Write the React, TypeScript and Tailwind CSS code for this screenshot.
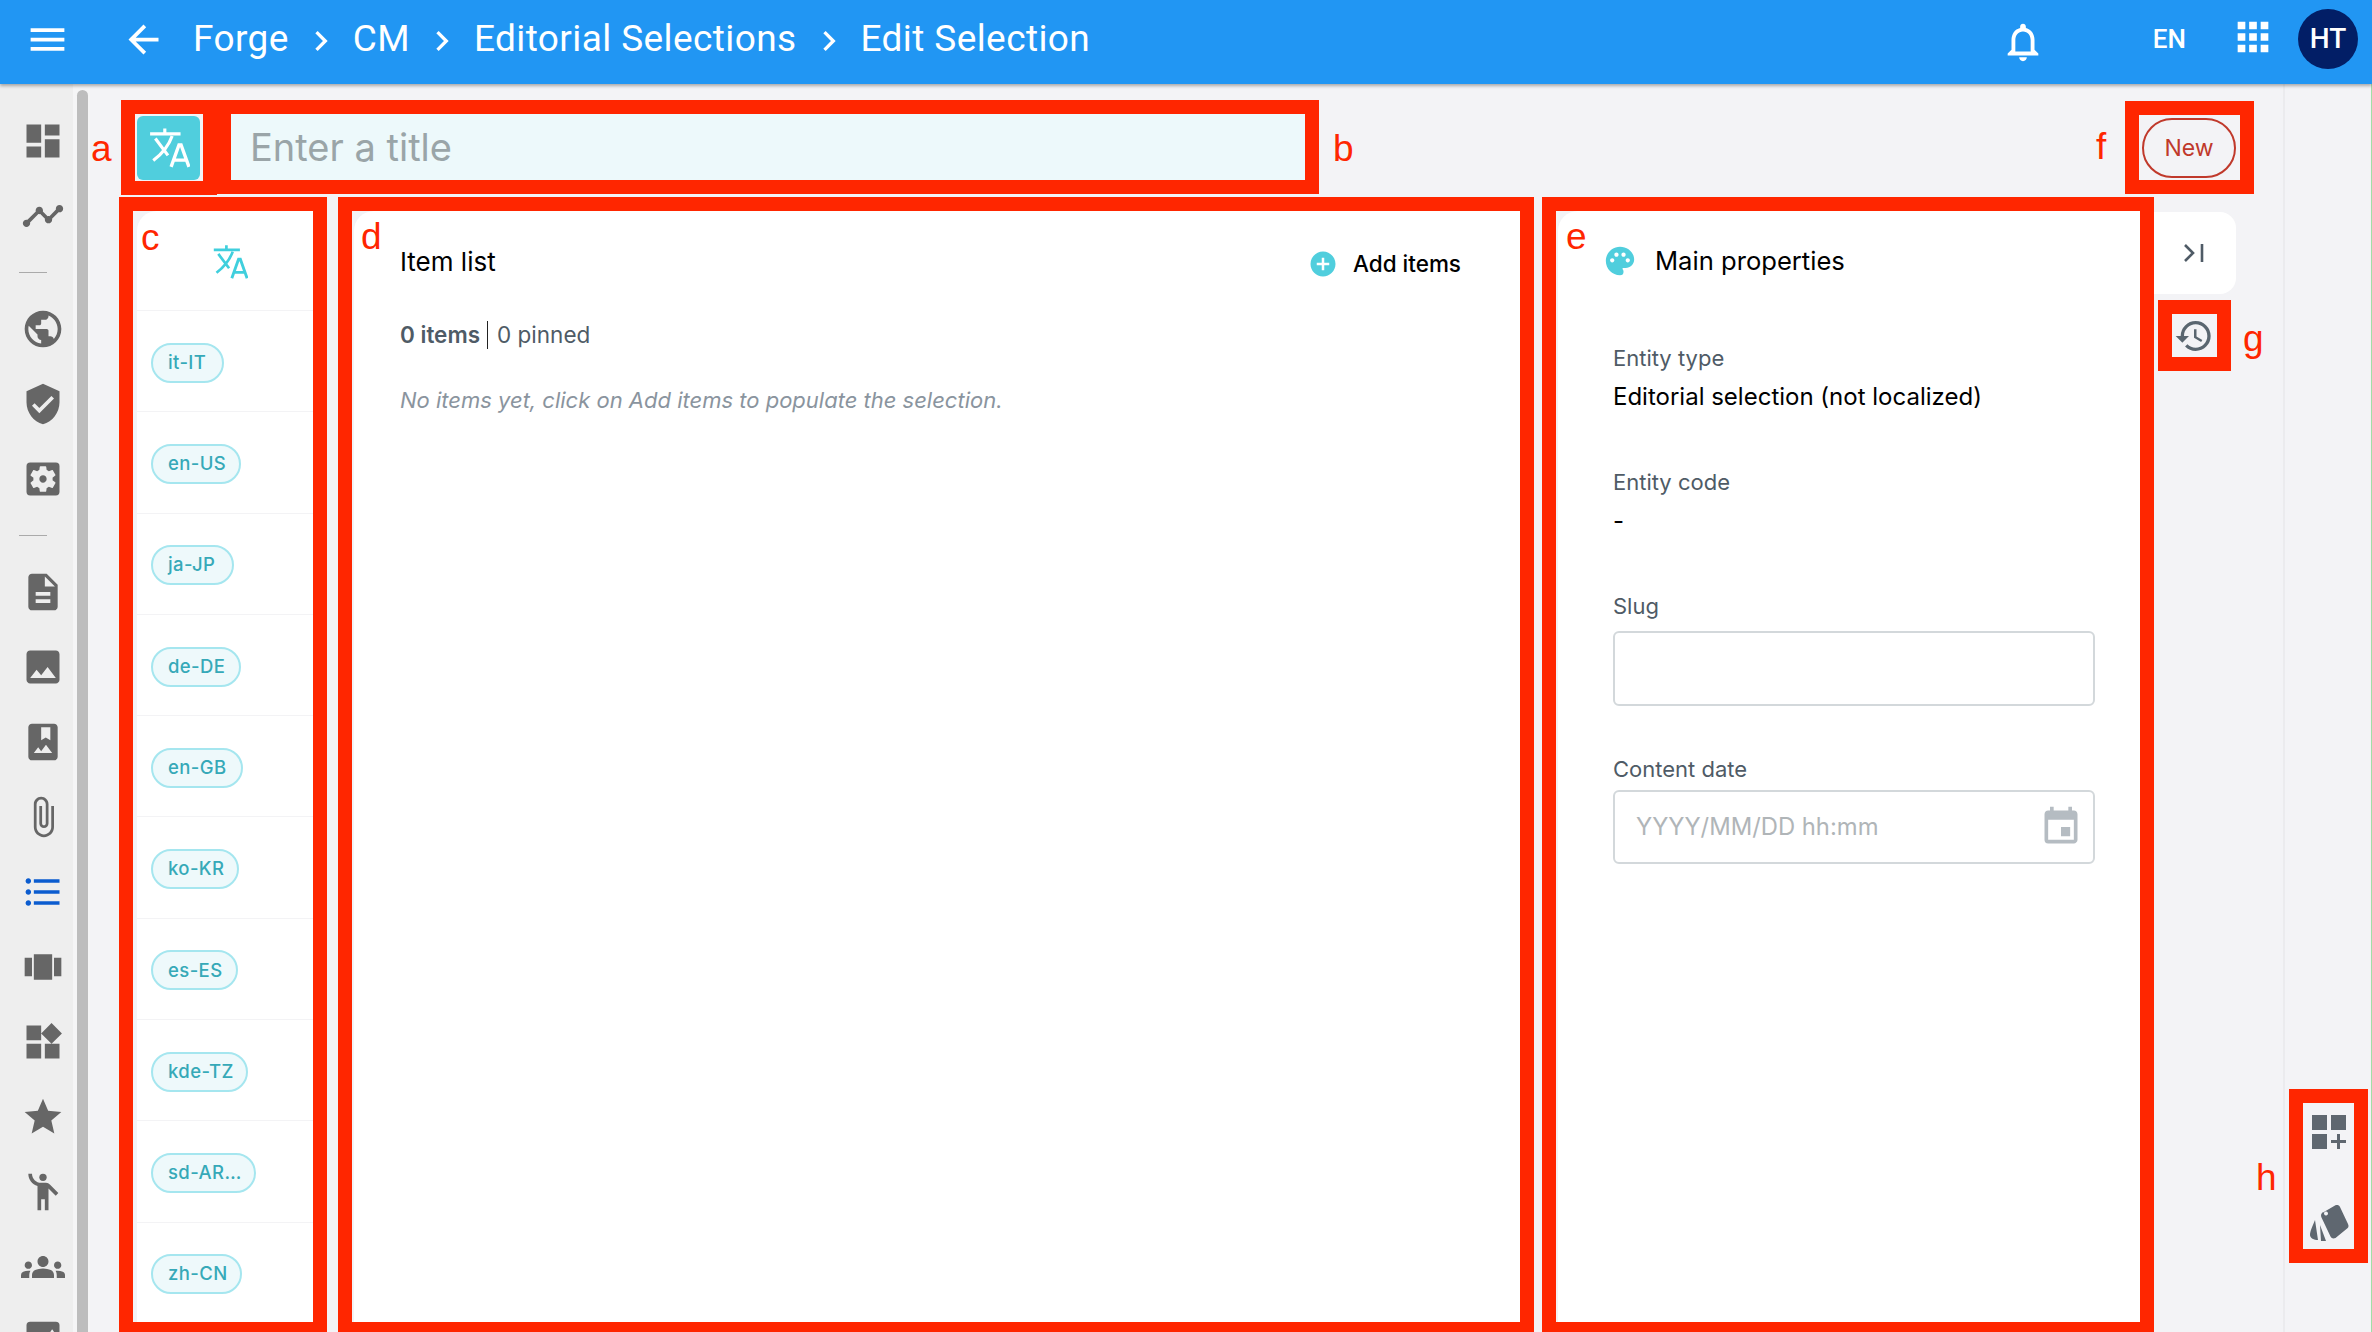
import React from "react";
import {
  MdMenu, MdArrowBack, MdChevronRight, MdNotificationsNone, MdApps, MdDashboard, MdTimeline, MdPublic,
  MdVerifiedUser, MdSettingsApplications, MdDescription, MdImage, MdPhotoAlbum, MdAttachFile,
  MdFormatListBulleted, MdViewCarousel, MdWidgets, MdStar, MdEmojiPeople, MdGroups,
  MdAddCircle, MdPalette, MdEvent, MdHistory,
} from "react-icons/md";

const Translate = ({ className }: { className: string }) => (
  <svg viewBox="0 0 40 40" className={className} fill="none" stroke="currentColor">
    <path d="M2 6.500h29M16 1.500v5" strokeWidth="3" />
    <path d="M7 11l12 16M23 8.500C20 17 14 25 5 32" strokeWidth="3" />
    <path d="M22 38l7.500-21h2l7.500 21M24.500 31.500h11" strokeWidth="3.200" />
  </svg>
);

const ImageBox = ({ className }: { className?: string }) => (
  <svg viewBox="0 0 24 24" className={`w-[44px] h-[44px] ${className ?? ""}`} fill="currentColor">
    <path d="M5 1h14a2 2 0 0 1 2 2v18H3V3a2 2 0 0 1 2-2z" />
    <path d="M17 5l2 3h-4z" fill="#eeeeee" />
  </svg>
);

const Pill = ({ label, w }: { label: string; w: string }) => (
  <div className="h-[101.3px] shrink-0 flex items-center pl-[14px] pt-[3px] border-t border-[#f3f3f5]">
    <span className={`${w} h-[40px] rounded-full border-2 border-[#a5e6ef] bg-[#eef9fb] pl-[15px] flex items-center text-[18.5px] tracking-[0.4px] font-medium text-[#36a9b8] whitespace-nowrap`}>
      {label}
    </span>
  </div>
);

const Field = ({ label, value }: { label: string; value: string }) => (
  <div className="h-[124px]">
    <div className="text-[22px] leading-[26px] text-[#4f5b66]">{label}</div>
    <div className="mt-[13px] text-[24px] leading-[26px] text-black">{value}</div>
  </div>
);

const Sep = () => <MdChevronRight className="text-[40px] mx-[12px] mt-[4px] shrink-0" />;

const sideTop = [MdPublic, MdVerifiedUser, MdSettingsApplications];
const sideBottom = [MdDescription, MdImage, MdPhotoAlbum, MdAttachFile];
const sideRest = [MdViewCarousel, MdWidgets, MdStar, MdEmojiPeople, MdGroups];

const SideIcon = ({ I, c = "text-[#666666]" }: { I: React.ComponentType<{ className?: string }>; c?: string }) => (
  <div className="h-[75px] shrink-0 flex items-center justify-center pl-[13px]">
    <I className={`text-[44px] ${c}`} />
  </div>
);

const Rule = () => (
  <div className="h-[38px] shrink-0 flex items-center">
    <div className="h-px w-[28px] ml-[19px] bg-[#aaaaaa]" />
  </div>
);

const Letter = ({ className, children }: { className: string; children: string }) => (
  <span className={`absolute pointer-events-none font-['Liberation_Sans',sans-serif] text-[37px] leading-[42px] text-[#ff2600] ${className}`}>
    {children}
  </span>
);

const frame = "absolute pointer-events-none border-[14px] border-[#ff2600]";

export default function App() {
  return (
    <div className="relative h-[1332px] w-[2372px] overflow-hidden flex flex-col bg-[#f3f3f6] font-['Inter',sans-serif]">
      <header className="relative z-10 h-[84px] shrink-0 bg-[#2196f3] shadow-[0_2px_3px_rgba(0,0,0,0.3)] text-white flex items-center pb-[6px] pl-[25px] pr-[14px] font-['Roboto',sans-serif]">
        <MdMenu className="text-[45px] shrink-0" />
        <MdArrowBack className="text-[45px] ml-[51px] shrink-0" />
        <div className="ml-[27px] flex items-center text-[37px] tracking-[0.4px]">
          <span>Forge</span>
          <Sep />
          <span>CM</span>
          <Sep />
          <span>Editorial Selections</span>
          <Sep />
          <span>Edit Selection</span>
        </div>
        <MdNotificationsNone className="text-[46px] ml-auto mt-[6px] shrink-0" />
        <span className="ml-[107px] text-[26px] font-medium">EN</span>
        <MdApps className="text-[46px] ml-[44px] -mt-[4px] shrink-0" />
        <span className="ml-[22px] h-[60px] w-[60px] rounded-full bg-[#021e66] flex items-center justify-center text-[28px] font-medium">HT</span>
      </header>

      <div className="flex flex-1 min-h-0">
        <nav className="w-[73px] shrink-0 bg-[#eeeeee] flex flex-col overflow-hidden pt-[19px]">
          <SideIcon I={MdDashboard} />
          <SideIcon I={MdTimeline} />
          <Rule />
          {sideTop.map((I, i) => <SideIcon key={i} I={I} />)}
          <Rule />
          {sideBottom.map((I, i) => <SideIcon key={i} I={I} />)}
          <SideIcon I={MdFormatListBulleted} c="text-[#0b5ccf]" />
          {sideRest.map((I, i) => <SideIcon key={i} I={I} />)}
          <div className="h-[75px] shrink-0 flex items-center justify-center pl-[13px] text-[#666666]"><ImageBox /></div>
        </nav>
        <div className="w-[17px] shrink-0 bg-[#f5f5f6] pt-[6px] pl-[4px] pr-[2px]">
          <div className="h-full rounded-t-[6px] bg-[#bdbdbd]" />
        </div>

        <main className="flex-1 min-w-0 flex flex-col pt-[30px] pl-[47px] pr-[47px] pb-[10px]">
          <div className="h-[66px] shrink-0 flex items-start">
            <button className="w-[63px] h-[64px] mt-[2px] rounded-[6px] bg-[#50cedd] text-white flex items-center justify-center">
              <Translate className="w-[42px] h-[42px]" />
            </button>
            <div className="ml-[31px] w-[1074px] h-[66px] bg-[#edf9fb] pl-[19px] flex items-center text-[38px] text-[#9aa5a8]">
              Enter a title
            </div>
            <button className="ml-auto mt-[4px] w-[94px] h-[60px] rounded-full border-2 border-[#c0392b] text-[23px] text-[#c0392b] flex items-center justify-center">
              New
            </button>
          </div>

          <div className="mt-[31px] flex-1 min-h-0 flex">
            <section className="w-[176px] shrink-0 bg-white rounded-tl-[20px] flex flex-col overflow-hidden">
              <div className="h-[99px] shrink-0 flex items-start pt-[33px] pl-[75px] text-[#40cfdd]">
                <Translate className="w-[36px] h-[36px]" />
              </div>
              <Pill label="it-IT" w="w-[73px]" />
              <Pill label="en-US" w="w-[90px]" />
              <Pill label="ja-JP" w="w-[83px]" />
              <Pill label="de-DE" w="w-[90px]" />
              <Pill label="en-GB" w="w-[92px]" />
              <Pill label="ko-KR" w="w-[88px]" />
              <Pill label="es-ES" w="w-[87px]" />
              <Pill label="kde-TZ" w="w-[97px]" />
              <Pill label="sd-AR…" w="w-[105px]" />
              <Pill label="zh-CN" w="w-[91px]" />
            </section>

            <section className="ml-[41px] w-[1166px] shrink-0 bg-white rounded-tl-[20px] pl-[46px] pr-[59px]">
              <div className="h-[100px] flex items-center">
                <span className="text-[26px] text-black">Item list</span>
                <MdAddCircle className="ml-auto text-[30px] text-[#50cedd] mt-[6px]" />
                <span className="ml-[15px] text-[22.5px] font-medium text-black mt-[6px]">Add items</span>
              </div>
              <div className="mt-[10px] text-[22.5px] leading-[26px] text-[#4f5b66] flex items-center">
                <span className="font-semibold">0 items</span>
                <span className="ml-[7px] mr-[9px] h-[28px] w-px bg-[#222222]" />
                <span>0 pinned</span>
              </div>
              <div className="mt-[38px] text-[22px] leading-[26px] italic text-[#8a949e]">
                No items yet, click on Add items to populate the selection.
              </div>
            </section>

            <section className="ml-[38px] w-[582px] shrink-0 bg-white rounded-tl-[20px] pl-[55px] pr-[45px]">
              <div className="h-[100px] flex items-center">
                <MdPalette className="-ml-[10px] text-[34px] text-[#50cedd]" />
                <span className="ml-[18px] text-[25.6px] text-black">Main properties</span>
              </div>
              <div className="mt-[34px]">
                <Field label="Entity type" value="Editorial selection (not localized)" />
                <Field label="Entity code" value="-" />
                <div className="text-[22px] leading-[26px] text-[#4f5b66]">Slug</div>
                <div className="mt-[12px] h-[75px] rounded-[6px] border-2 border-[#d3d8db]" />
                <div className="mt-[50px] text-[22px] leading-[26px] text-[#4f5b66]">Content date</div>
                <div className="mt-[8px] h-[74px] rounded-[6px] border-2 border-[#d3d8db] flex items-center pl-[21px] pr-[10px] text-[23.8px] text-[#b0b5b8]">
                  YYYY/MM/DD hh:mm
                  <MdEvent className="ml-auto text-[44px] text-[#b5bcc2]" />
                </div>
              </div>
            </section>

            <aside className="flex-1 min-w-0 flex flex-col items-center">
              <div className="w-full h-[82px] mt-[1px] bg-white rounded-r-[16px] flex items-center justify-center">
                <svg viewBox="0 0 24 24" className="w-[24px] h-[24px] text-[#4f5b66] ml-[12px]" fill="none" stroke="currentColor" strokeWidth="2.600">
                  <path d="M3 4l8 8-8 8M20 3v18" />
                </svg>
              </div>
              <MdHistory className="mt-[22px] ml-[12px] text-[40px] text-[#5a6670]" />
            </aside>
          </div>
        </main>

        <aside className="w-[88px] shrink-0 border-l-2 border-[#ebebee] flex flex-col justify-end items-center pb-[90px] pl-[2px]">
          <svg viewBox="0 0 34 34" className="w-[34px] h-[34px] text-[#5f6770]" fill="currentColor">
            <rect x="0" y="0" width="15" height="15" />
            <rect x="19" y="0" width="15" height="15" />
            <rect x="0" y="19" width="15" height="15" />
            <path d="M25 19h3v6h6v3h-6v6h-3v-6h-6v-3h6z" />
          </svg>
          <svg viewBox="0 0 40 38" className="mt-[55px] w-[40px] h-[38px] text-[#5f6770]" fill="currentColor">
            <path fillRule="evenodd" d="M14 8.500 26 1.500c2-1 4-.5 5 1.500l8 17c1 2 .5 4-1.500 5l-11 9c-2 1-4 .500-5-1.500l-9-19c-1-2-.500-4 1.500-5.500zM17 7.500a2 2 0 1 0 .01 0z" />
            <path d="M6 16l3 20c-4 0-8-2-8-5 0-4 3-10 5-15z" />
            <path d="M11 21l6 16h-5z" />
          </svg>
        </aside>
        <div className="w-px shrink-0 bg-[#9fe0a8]" />
      </div>

      {/* review annotations laid over the screenshot */}
      <div className={`${frame} left-[121px] top-[100px] w-[96px] h-[95px]`} />
      <div className={`${frame} left-[217px] top-[100px] w-[1102px] h-[94px]`} />
      <div className={`${frame} left-[119px] top-[197px] w-[208px] h-[1135px] border-b-[10px]`} />
      <div className={`${frame} left-[338px] top-[197px] w-[1196px] h-[1135px] border-b-[10px]`} />
      <div className={`${frame} left-[1542px] top-[197px] w-[612px] h-[1135px] border-b-[10px]`} />
      <div className={`${frame} left-[2125px] top-[101px] w-[129px] h-[93px]`} />
      <div className={`${frame} left-[2158px] top-[300px] w-[73px] h-[71px]`} />
      <div className={`${frame} left-[2289px] top-[1089px] w-[79px] h-[174px]`} />
      <Letter className="left-[91px] top-[128px]">a</Letter>
      <Letter className="left-[1333px] top-[128px]">b</Letter>
      <Letter className="left-[141px] top-[217px]">c</Letter>
      <Letter className="left-[361px] top-[216px]">d</Letter>
      <Letter className="left-[1566px] top-[216px]">e</Letter>
      <Letter className="left-[2096px] top-[126px]">f</Letter>
      <Letter className="left-[2243px] top-[318px]">g</Letter>
      <Letter className="left-[2256px] top-[1157px]">h</Letter>
    </div>
  );
}
